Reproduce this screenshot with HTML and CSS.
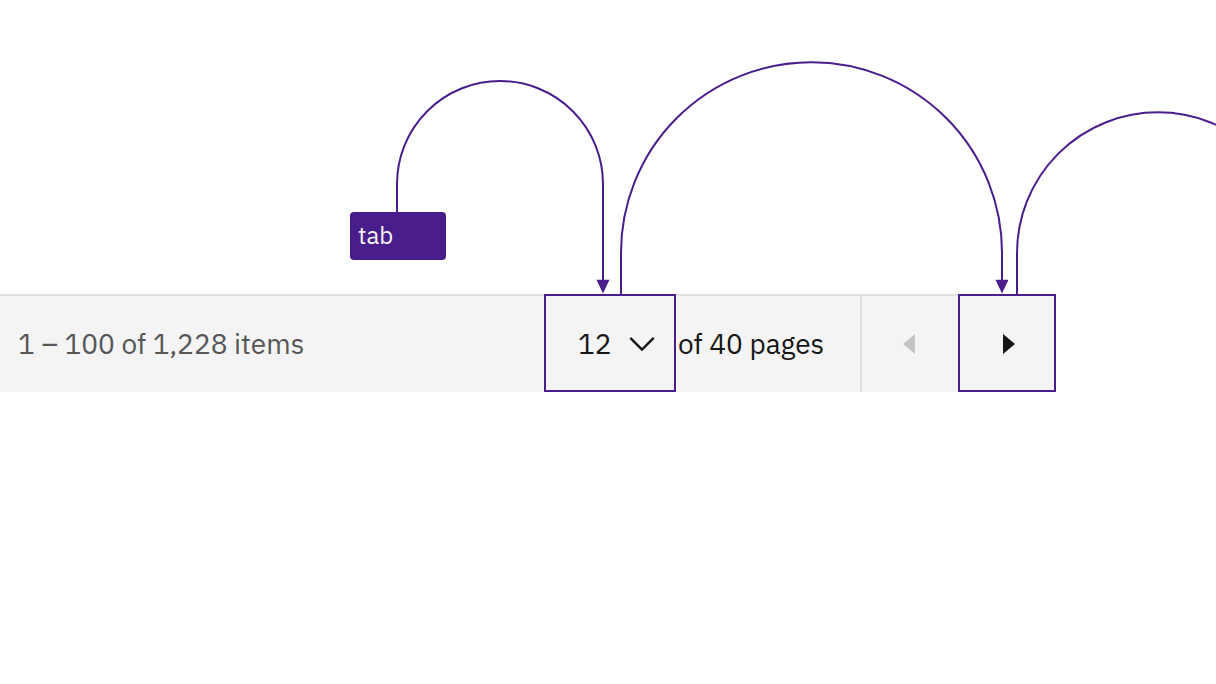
FILE: index.html
```html
<!DOCTYPE html>
<html lang="en">
<head>
<meta charset="utf-8">
<meta name="viewport" content="width=device-width, initial-scale=1">
<title>Pagination keyboard navigation</title>
<link rel="stylesheet" href="styles.css">
</head>
<body>
<main class="figure">
  <div class="flow">
    <svg class="flow-lines" width="1216" height="294" viewBox="0 0 1216 294" aria-hidden="true">
      <g class="flow-path">
        <path d="M397 212V184A103 103 0 0 1 603 184V281"/>
        <path d="M621 294V252.700A190.5 190.5 0 0 1 1002 252.700V281"/>
        <path d="M1017 294V253.300A141 141 0 0 1 1299 253.300"/>
      </g>
      <path class="flow-head" d="M596.5 279.7h13L603 293.4zM995.5 279.7h13L1002 293.4z"/>
    </svg>
    <kbd class="key">tab</kbd>
  </div>
  <nav class="pagination" aria-label="Pagination">
    <span class="range">1 – 100 of 1,228 items</span>
    <div class="page-picker">
      <select class="page-select" id="page" aria-label="Page number">
        <option>11</option>
        <option selected>12</option>
        <option>13</option>
      </select>
      <svg class="chevron" width="26" height="16" viewBox="0 0 26 16" aria-hidden="true"><path d="M1.3 1.8L13 13.5 24.7 1.8"/></svg>
    </div>
    <label class="total" for="page">of 40 pages</label>
    <button class="step step-prev" type="button" aria-label="Previous page" disabled>
      <svg width="12" height="20" viewBox="0 0 12 20" aria-hidden="true"><path d="M12 0v20L0 10z"/></svg>
    </button>
    <button class="step step-next" type="button" aria-label="Next page">
      <svg width="12" height="20" viewBox="0 0 12 20" aria-hidden="true"><path d="M0 0v20l12-10z"/></svg>
    </button>
  </nav>
</main>
</body>
</html>
```
FILE: styles.css
```css
* {
  box-sizing: border-box;
}

body {
  margin: 0;
  background: #fff;
  color: #161616;
  font-family: "IBM Plex Sans", "Noto Sans", sans-serif;
  font-size: 28px;
  line-height: 36px;
}

.figure {
  overflow: hidden;
}

.flow {
  position: relative;
  height: 294px;
}

.flow-lines {
  display: block;
}

.flow-path {
  fill: none;
  stroke: #491d8b;
  stroke-width: 2;
}

.flow-head {
  fill: #491d8b;
}

.key {
  position: absolute;
  left: 350px;
  top: 212px;
  width: 96px;
  padding: 5px 8px 7px;
  border-radius: 4px;
  background: #491d8b;
  color: #f4f4f4;
  font-family: inherit;
  font-size: 24px;
}

.pagination {
  display: flex;
  align-items: stretch;
  height: 98px;
  margin-right: 160px;
  background: #f4f4f4;
  box-shadow: inset 0 2px #e0e0e0;
}

.range {
  flex: 1;
  align-self: center;
  padding: 2px 0 0 18px;
  color: #565656;
  white-space: nowrap;
}

.page-picker {
  position: relative;
  display: flex;
  width: 132px;
}

.page-select {
  flex: 1;
  min-width: 0;
  appearance: none;
  padding: 2px 48px 0 32px;
  border: 2px solid #491d8b;
  border-radius: 0;
  outline: 0;
  background: #f4f4f4;
  color: inherit;
  font: inherit;
}

.chevron {
  position: absolute;
  right: 21px;
  top: 42px;
  fill: none;
  stroke: #161616;
  stroke-width: 2.4;
  pointer-events: none;
}

.total {
  align-self: center;
  width: 184px;
  padding: 2px 0 0 2px;
  white-space: nowrap;
}

.step {
  display: flex;
  align-items: center;
  justify-content: center;
  width: 98px;
  padding: 2px 0 0;
  border: 0;
  border-radius: 0;
  background: none;
  color: #161616;
}

.step svg {
  fill: currentColor;
}

.step-prev {
  padding-right: 2px;
  border-left: 2px solid #e0e0e0;
  color: #c4c4c4;
}

.step-next {
  padding-left: 4px;
  border: 2px solid #491d8b;
  background: #f4f4f4;
}
```
